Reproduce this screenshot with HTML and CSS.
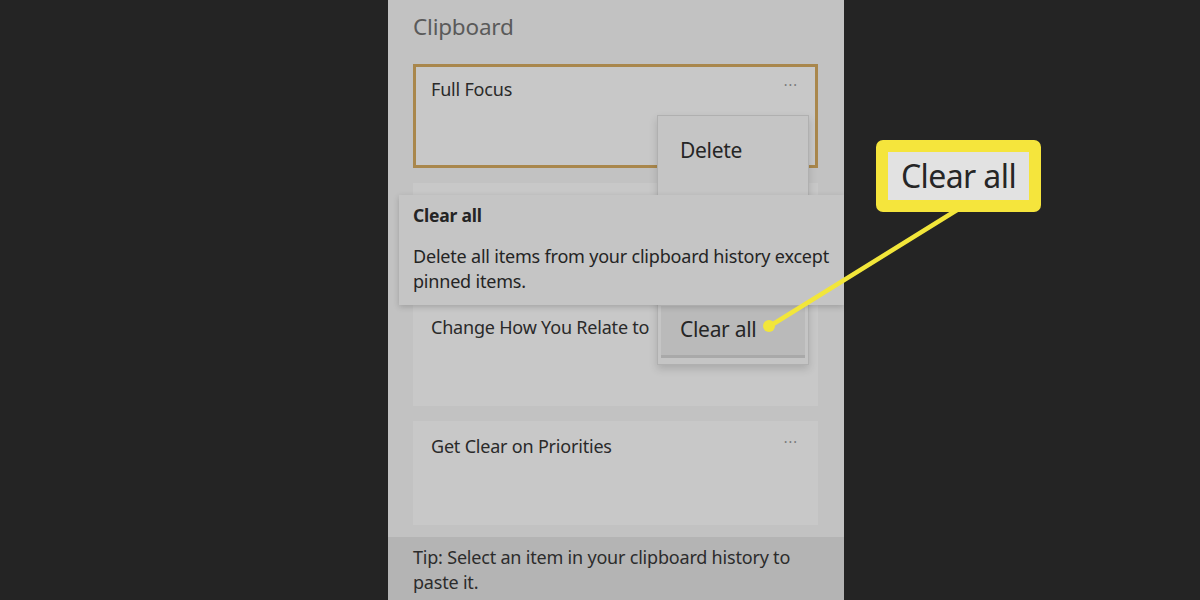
FILE: index.html
```html
<!DOCTYPE html>
<html>
<head>
<meta charset="utf-8">
<link rel="stylesheet" href="styles.css">
</head>
<body>
<div class="stage">
  <div class="panel">
    <h1 class="title">Clipboard</h1>
    <div class="list">
      <div class="card card-focus"><span class="card-text">Full Focus</span><span class="dots">···</span></div>
      <div class="card"></div>
      <div class="card"><span class="card-text">Change How You Relate to</span></div>
      <div class="card"><span class="card-text">Get Clear on Priorities</span><span class="dots">···</span></div>
    </div>
    <div class="tip">Tip: Select an item in your clipboard history to paste it.</div>

    <div class="menu">
      <div class="menu-item">Delete</div>
      <div class="menu-item">Pin</div>
      <div class="menu-gap"></div>
      <div class="menu-item active">Clear all</div>
    </div>

    <div class="tooltip">
      <div class="tooltip-title">Clear all</div>
      <div class="tooltip-body">Delete all items from your clipboard history except pinned items.</div>
    </div>
  </div>

  <svg class="pointer" width="1200" height="600" viewBox="0 0 1200 600">
    <line x1="957" y1="210" x2="770" y2="326" stroke="#f2e63a" stroke-width="4.5" stroke-linecap="round"/>
    <circle cx="769" cy="326" r="6" fill="#f2e63a"/>
  </svg>

  <div class="callout"><span class="callout-text">Clear all</span></div>
</div>
</body>
</html>
```

FILE: styles.css
```css
* { box-sizing: border-box; }
html, body { margin: 0; padding: 0; }
body {
  background: #242424;
  font-family: "Noto Sans", "Open Sans", sans-serif;
  width: 1200px;
  height: 600px;
  overflow: hidden;
}
.stage {
  position: relative;
  width: 1200px;
  height: 600px;
  display: flex;
}
.panel {
  position: relative;
  margin-left: 388px;
  width: 456px;
  height: 600px;
  background: #c2c2c2;
  display: flex;
  flex-direction: column;
}
.title {
  margin: 0;
  padding: 12px 0 0 25px;
  height: 64px;
  font-size: 22.5px;
  font-weight: 400;
  color: #5a5a5a;
  line-height: 30px;
  letter-spacing: -0.2px;
}
.list {
  display: flex;
  flex-direction: column;
  gap: 15px;
  padding: 0 26px 0 25px;
}
.card {
  position: relative;
  height: 104px;
  background: #c8c8c8;
  padding: 13px 18px;
  display: flex;
  justify-content: space-between;
  align-items: flex-start;
}
.card-focus {
  border: 3px solid #a9874c;
  padding: 10px 15px;
}
.card-text {
  font-size: 18px;
  color: #2a2a2a;
  line-height: 24px;
  letter-spacing: -0.2px;
  white-space: nowrap;
}
.dots {
  font-size: 14px;
  color: #777;
  line-height: 16px;
  margin-right: 2px;
  letter-spacing: 1px;
}
.tip {
  margin-top: auto;
  height: 63px;
  background: #b4b4b4;
  padding: 8px 25px 0 25px;
  font-size: 18px;
  line-height: 25px;
  color: #2c2c2c;
  letter-spacing: -0.2px;
}
.menu {
  position: absolute;
  left: 269px;
  top: 115px;
  width: 152px;
  height: 250px;
  background: #c5c5c5;
  border: 1px solid #b0b0b0;
  box-shadow: 0 4px 8px rgba(0,0,0,0.15);
  display: flex;
  flex-direction: column;
  padding: 4px 3px;
}
.menu-item {
  height: 60px;
  padding-left: 19px;
  font-size: 21px;
  line-height: 60px;
  color: #262626;
  letter-spacing: -0.3px;
}
.menu-gap { height: 66px; }
.menu-item.active {
  height: 52px;
  line-height: 46px;
  background: #bababa;
  border-bottom: 3px solid #a9a9a9;
}
.tooltip {
  position: absolute;
  left: 11px;
  top: 195px;
  width: 445px;
  height: 110px;
  background: #c5c5c5;
  box-shadow: 0 2px 6px rgba(0,0,0,0.18);
  padding: 7px 6px 8px 14px;
  color: #242424;
}
.tooltip-title {
  font-size: 17.5px;
  font-weight: 700;
  line-height: 26px;
  margin-bottom: 16px;
  letter-spacing: -0.2px;
}
.tooltip-body {
  font-size: 18px;
  line-height: 25px;
  letter-spacing: -0.2px;
}
.pointer {
  position: absolute;
  left: 0;
  top: 0;
  pointer-events: none;
}
.callout {
  position: absolute;
  left: 876px;
  top: 140px;
  width: 165px;
  height: 72px;
  background: #f5e53c;
  border-radius: 7px;
  padding: 12px 12px;
  display: flex;
}
.callout-text {
  flex: 1;
  background: #e2e2e2;
  font-size: 32px;
  line-height: 48px;
  color: #262626;
  text-align: center;
  letter-spacing: -0.6px;
}
```
